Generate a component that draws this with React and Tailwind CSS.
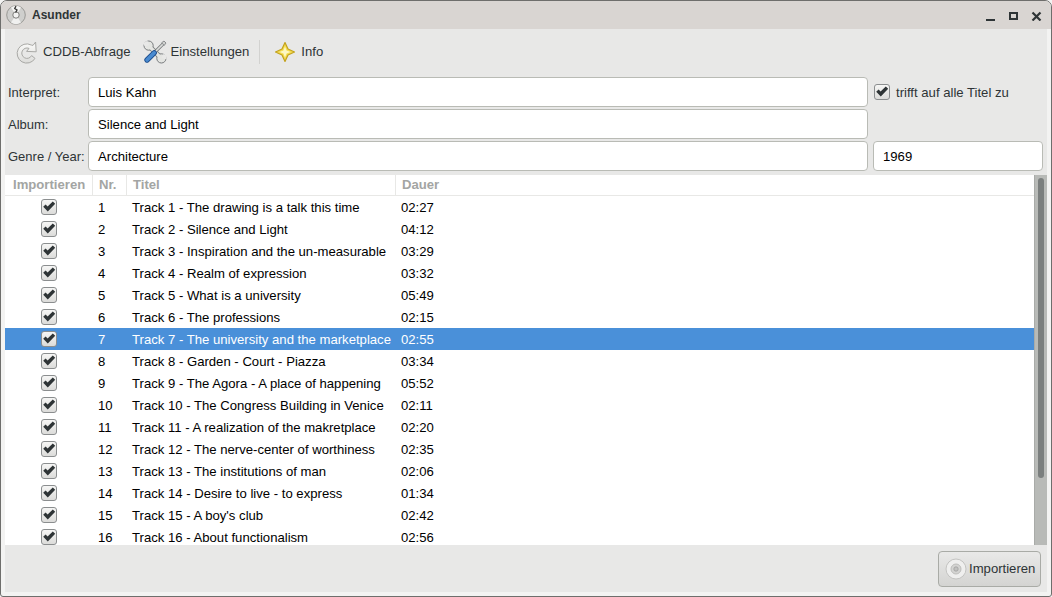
import React from 'react'

const tracks = [
  ['Track 1 - The drawing is a talk this time', '02:27'],
  ['Track 2 - Silence and Light', '04:12'],
  ['Track 3 - Inspiration and the un-measurable', '03:29'],
  ['Track 4 - Realm of expression', '03:32'],
  ['Track 5 - What is a university', '05:49'],
  ['Track 6 - The professions', '02:15'],
  ['Track 7 - The university and the marketplace', '02:55'],
  ['Track 8 - Garden - Court - Piazza', '03:34'],
  ['Track 9 - The Agora - A place of happening', '05:52'],
  ['Track 10 - The Congress Building in Venice', '02:11'],
  ['Track 11 - A realization of the makretplace', '02:20'],
  ['Track 12 - The nerve-center of worthiness', '02:35'],
  ['Track 13 - The institutions of man', '02:06'],
  ['Track 14 - Desire to live - to express', '01:34'],
  ['Track 15 - A boy\'s club', '02:42'],
  ['Track 16 - About functionalism', '02:56'],
]

function Check() {
  return (
    <span className="flex h-[16px] w-[16px] shrink-0 items-center justify-center rounded-[3px] border border-[#8b8e8f] bg-gradient-to-b from-[#f6f6f5] to-[#dcdcda]">
      <svg width="14" height="14" viewBox="0 0 14 14">
        <path d="M1.2 6.8 L3.6 4.6 L5.6 6.6 L10.8 1.6 L13.2 3.8 L5.8 11.6 Z" fill="#2e3436" />
      </svg>
    </span>
  )
}

function Disc() {
  return (
    <svg width="20" height="20" viewBox="0 0 20 20">
      <circle cx="10" cy="10" r="9.3" fill="#cfcfcd" stroke="#8a8a87" strokeWidth="0.8" />
      <path d="M10 10 L5 2.5 A9 9 0 0 1 15 2.5 Z" fill="#f4f4f3" />
      <path d="M10 10 L15 17.5 A9 9 0 0 1 5 17.5 Z" fill="#f0f0ef" />
      <circle cx="10" cy="10" r="3.2" fill="#f2f2f1" stroke="#6f6f6d" strokeWidth="0.9" />
      <path d="M10 1 L8.7 3.6 L11 5 L9.6 7.6" fill="none" stroke="#3a3a38" strokeWidth="1.3" />
    </svg>
  )
}

function RefreshIcon() {
  return (
    <svg width="24" height="24" viewBox="0 0 24 24">
      <defs>
        <linearGradient id="refresh-fill" x1="0" y1="0" x2="0" y2="1">
          <stop offset="0" stopColor="#fbfbfa" />
          <stop offset="1" stopColor="#dcdcd9" />
        </linearGradient>
      </defs>
      <path d="M16.2 5 A9.6 9.6 0 1 0 20 18.4 L16.6 15.6 A5.2 5.2 0 1 1 14 8.4 L11.6 11.4 L21.2 11.8 L20.6 2 L18 5.4 Z" fill="url(#refresh-fill)" stroke="#a8a8a5" strokeWidth="1" strokeLinejoin="round" />
    </svg>
  )
}

function ToolsIcon() {
  return (
    <svg width="24" height="24" viewBox="0 0 24 24">
      {/* 扳手 */}
      <path d="M6 6 L18 18" stroke="#777a7c" strokeWidth="5" />
      <circle cx="5.6" cy="5.6" r="4.6" fill="#e4e5e2" stroke="#777a7c" />
      <circle cx="18.4" cy="18.4" r="4.6" fill="#e4e5e2" stroke="#777a7c" />
      <path d="M6 6 L18 18" stroke="#e4e5e2" strokeWidth="3.2" />
      <path d="M4.4 0.4 L6 5 L2 6.4 L0 3.4 Z" fill="#e8e8e7" />
      <path d="M23.6 19.6 L18.6 18 L20 14 L23.6 15.4 Z" fill="#e8e8e7" />
      {/* 螺丝刀 */}
      <path d="M20.4 3.6 L12 12" stroke="#777a7c" strokeWidth="3.2" />
      <path d="M20.4 3.6 L12 12" stroke="#dcdedc" strokeWidth="1.6" />
      <path d="M18.6 2.8 L21 1 L23 3 L21.2 5.4 Z" fill="#cfd1cf" stroke="#777a7c" strokeWidth="0.8" />
      <path d="M11.2 12.8 L4 20" stroke="#1f4f8f" strokeWidth="5.4" strokeLinecap="round" />
      <path d="M11.2 12.8 L4 20" stroke="#4a8bd0" strokeWidth="3.6" strokeLinecap="round" />
    </svg>
  )
}

function StarIcon() {
  return (
    <svg width="22" height="22" viewBox="0 0 22 22">
      <path d="M11 1.5 L14 8 L20.5 11 L14 14 L11 20.5 L8 14 L1.5 11 L8 8 Z" fill="#f5dc4f" stroke="#c2a21f" strokeWidth="1.2" strokeLinejoin="round" />
      <path d="M11 5.5 L12.6 9.4 L16.5 11 L12.6 12.6 L11 16.5 L9.4 12.6 L5.5 11 L9.4 9.4 Z" fill="#fdf8c4" />
    </svg>
  )
}

function Field({ value, className }) {
  return (
    <div className={`flex h-[30px] items-center rounded-[4px] border border-[#b9bbb5] bg-white px-[9px] pt-[1px] text-black ${className}`}>
      {value}
    </div>
  )
}

function FormRow({ label, children }) {
  return (
    <div className="flex h-[30px] items-center">
      <span className="w-[83px] pl-[3px] pt-[1px] text-[13px] text-[#2e3436]">{label}</span>
      {children}
    </div>
  )
}

function HeaderCell({ className, children }) {
  return (
    <div className={`flex h-full items-center border-r border-[#e8e8e6] font-bold text-[#a3a5a3] ${className}`}>
      {children}
    </div>
  )
}

function TrackRow({ number, title, duration, selected }) {
  return (
    <div className={`flex h-[22px] shrink-0 items-center ${selected ? 'bg-[#4a90d9] text-white' : 'text-black'}`}>
      <div className="flex w-[88px] justify-center pr-[1px]"><Check /></div>
      <div className="w-[39px] pl-[5px] pt-[1px]">{number}</div>
      <div className="w-[264px] whitespace-nowrap pt-[1px]">{title}</div>
      <div className="pl-[5px] pt-[1px]">{duration}</div>
    </div>
  )
}

export default function App() {
  return (
    <div className="h-[597px] w-[1052px] overflow-hidden bg-[#f3f3f2] font-['Liberation_Sans',sans-serif] text-[13.13px]">
      <div className="flex h-full flex-col overflow-hidden rounded-t-[7px] rounded-b-[3px] border border-[#6e6e6c]">
        {/* 标题栏 */}
        <div className="flex h-[28px] shrink-0 items-center bg-[#d9d5d2] pl-[5px] pr-[7px]">
          <Disc />
          <span className="ml-[6px] text-[12px] font-bold text-[#2e3436]">Asunder</span>
          <div className="ml-auto flex items-center gap-[11px] pr-[1px]">
            <svg width="12" height="12" viewBox="0 0 12 12"><rect x="1" y="10" width="9" height="2" fill="#2e3436" /></svg>
            <svg width="12" height="12" viewBox="0 0 12 12"><rect x="2" y="4" width="7" height="6" fill="none" stroke="#2e3436" strokeWidth="2" /></svg>
            <svg width="12" height="12" viewBox="0 0 12 12"><path d="M1.5 3.5 L9.5 11.5 M9.5 3.5 L1.5 11.5" stroke="#2e3436" strokeWidth="2.2" /></svg>
          </div>
        </div>

        <div className="flex min-h-0 flex-1 flex-col px-[4px] pb-[4px]">
          <div className="flex min-h-0 flex-1 flex-col bg-[#e8e8e7]">
            {/* 工具栏 */}
            <div className="mb-[3px] flex h-[45px] shrink-0 items-center pl-[10px] text-[#2e3436]">
              <RefreshIcon />
              <span className="ml-[4px]">CDDB-Abfrage</span>
              <div className="ml-[12px]"><ToolsIcon /></div>
              <span className="ml-[4px]">Einstellungen</span>
              <div className="ml-[10px] h-[24px] w-px bg-[#d2d2d0]" />
              <div className="ml-[14px]"><StarIcon /></div>
              <span className="ml-[5px]">Info</span>
            </div>

            {/* 表单 */}
            <div className="flex shrink-0 flex-col gap-[2px]">
              <FormRow label="Interpret:">
                <Field value="Luis Kahn" className="w-[780px]" />
                <div className="ml-[6px]"><Check /></div>
                <span className="ml-[6px] pt-[1px] text-[#2e3436]">trifft auf alle Titel zu</span>
              </FormRow>
              <FormRow label="Album:">
                <Field value="Silence and Light" className="w-[780px]" />
              </FormRow>
              <FormRow label="Genre / Year:">
                <Field value="Architecture" className="w-[780px]" />
                <Field value="1969" className="ml-[5px] w-[170px]" />
              </FormRow>
            </div>

            {/* 曲目列表 */}
            <div className="mt-[4px] flex min-h-0 flex-1 bg-white">
              <div className="flex min-w-0 flex-1 flex-col overflow-hidden">
                <div className="flex h-[21px] shrink-0 items-center border-b border-[#e8e8e6]">
                  <HeaderCell className="w-[88px] pl-[8px]">Importieren</HeaderCell>
                  <HeaderCell className="w-[34px] pl-[6px]">Nr.</HeaderCell>
                  <HeaderCell className="w-[269px] pl-[6px]">Titel</HeaderCell>
                  <div className="pl-[6px] font-bold text-[#a3a5a3]">Dauer</div>
                </div>
                {tracks.map((track, i) => (
                  <TrackRow key={track[0]} number={i + 1} title={track[0]} duration={track[1]} selected={i === 6} />
                ))}
              </div>
              <div className="w-[13px] shrink-0 border-l border-[#a9aba8] bg-[#b8bab7] py-[3px] pl-[3px] pr-[3px]">
                <div className="h-[300px] rounded-[4px] bg-[#7b7f7e]" />
              </div>
            </div>

            {/* 底部按钮 */}
            <div className="flex h-[47px] shrink-0 items-center justify-end pr-[6px]">
              <div className="flex h-[36px] w-[103px] items-center gap-[2px] rounded-[4px] border border-[#a9aba6] bg-gradient-to-b from-[#e9e9e8] to-[#d4d4d2] pl-[6px] text-[#2e3436]">
                <svg width="22" height="22" viewBox="0 0 22 22">
                  <circle cx="11" cy="11" r="10" fill="#efefee" stroke="#c4c4c2" />
                  <circle cx="11" cy="11" r="5" fill="#d4d4d2" stroke="#bdbdbb" />
                  <circle cx="11" cy="11" r="2.2" fill="#c2c2c0" stroke="#9a9a98" strokeWidth="0.7" />
                </svg>
                <span>Importieren</span>
              </div>
            </div>
          </div>
        </div>
      </div>
    </div>
  )
}
